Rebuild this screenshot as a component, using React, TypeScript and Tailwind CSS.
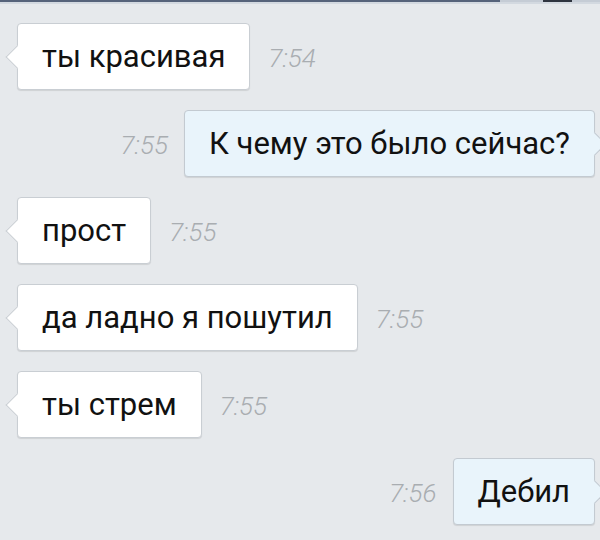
import React from "react";

type Msg = { text: string; time: string; out?: boolean };

const msgs: Msg[] = [
  { text: "ты красивая", time: "7:54" },
  { text: "К чему это было сейчас?", time: "7:55", out: true },
  { text: "прост", time: "7:55" },
  { text: "да ладно я пошутил", time: "7:55" },
  { text: "ты стрем", time: "7:55" },
  { text: "Дебил", time: "7:56", out: true },
];

function Time({ t }: { t: string }) {
  return (
    <span
      className="text-[26px] italic font-light text-[#a9adb1] leading-none"
      style={{ fontFamily: "Roboto, sans-serif" }}
    >
      {t}
    </span>
  );
}

function Bubble({ m }: { m: Msg }) {
  return (
    <div
      className={
        m.out
          ? "relative flex items-center h-[67px] px-[24px] rounded-[4px] border border-[#c3cad1] bg-[#e9f4fb] shadow-[0_1px_1px_rgba(0,0,0,0.10)]"
          : "relative flex items-center h-[67px] px-[24px] rounded-[4px] border border-[#c9ced3] bg-white shadow-[0_1px_1px_rgba(0,0,0,0.10)]"
      }
    >
      <span className="text-[31px] text-[#111111] leading-none whitespace-nowrap">{m.text}</span>
      {m.out ? (
        <span className="absolute right-[-9px] top-1/2 -translate-y-1/2 w-[17px] h-[17px] rotate-45 bg-[#e9f4fb] border-t border-r border-[#c3cad1]" />
      ) : (
        <span className="absolute left-[-9px] top-1/2 -translate-y-1/2 w-[17px] h-[17px] rotate-45 bg-white border-l border-b border-[#c9ced3]" />
      )}
    </div>
  );
}

export default function App() {
  return (
    <div
      className="relative w-[600px] h-[540px] overflow-hidden bg-[#e6e9ec]"
      style={{ fontFamily: "Roboto, 'Open Sans', sans-serif" }}
    >
      <div className="flex h-[2px]">
        <div className="w-[500px] bg-[#56637a]" />
        <div className="w-[43px] bg-[#c5ccd5]" />
        <div className="w-[29px] bg-[#2f3540]" />
        <div className="flex-1 bg-[#c5ccd5]" />
      </div>
      <div className="h-[2px] bg-[#d3d9e0]" />
      <div className="flex flex-col gap-[20px] pt-[19px]">
        {msgs.map((m, i) =>
          m.out ? (
            <div key={i} className="flex items-baseline justify-end gap-[16px] pr-[5px]">
              <Time t={m.time} />
              <Bubble m={m} />
            </div>
          ) : (
            <div key={i} className="flex items-baseline gap-[18px] pl-[17px]">
              <Bubble m={m} />
              <Time t={m.time} />
            </div>
          )
        )}
      </div>
    </div>
  );
}
